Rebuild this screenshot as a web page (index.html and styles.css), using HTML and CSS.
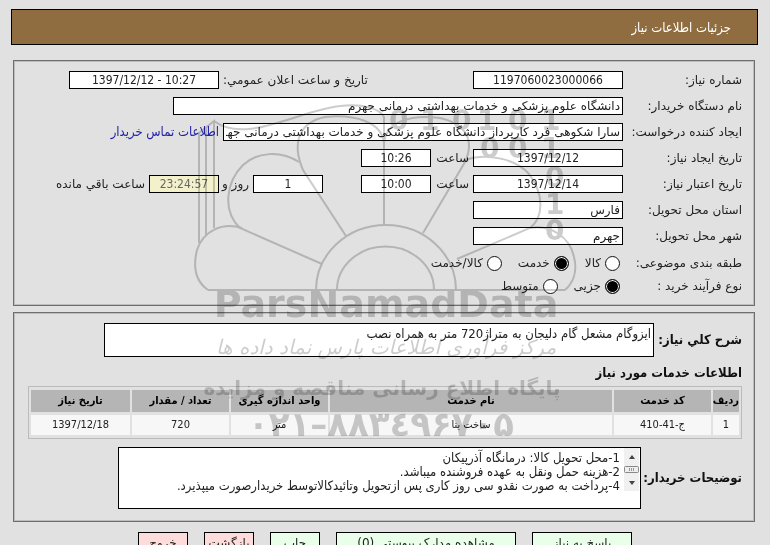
FILE: index.html
```html
<!DOCTYPE html>
<html lang="fa" dir="rtl">
<head>
<meta charset="utf-8">
<meta name="viewport" content="width=device-width, initial-scale=1">
<title>جزئیات اطلاعات نیاز</title>
<link rel="stylesheet" href="styles.css">
</head>
<body>
<header class="title-bar"><h1>جزئیات اطلاعات نیاز</h1></header>
<form class="form">
  <section class="panel details">
    <div class="row">
      <label class="name" for="number">شماره نیاز:</label>
      <input class="field medium center" id="number" value="1197060023000066" readonly>
      <label class="announce" for="announced">تاریخ و ساعت اعلان عمومي:</label>
      <input class="field medium center" id="announced" value="1397/12/12 - 10:27" dir="ltr" readonly>
    </div>
    <div class="row">
      <label class="name" for="buyer">نام دستگاه خریدار:</label>
      <input class="field long" id="buyer" value="دانشگاه علوم پزشکی و خدمات بهداشتی درمانی جهرم" readonly>
    </div>
    <div class="row">
      <label class="name" for="creator">ایجاد کننده درخواست:</label>
      <input class="field creator" id="creator" value="سارا شکوهی فرد کارپرداز دانشگاه علوم پزشکی و خدمات بهداشتی درمانی جهرم" readonly>
      <a class="contact" href="#contact">اطلاعات تماس خریدار</a>
    </div>
    <div class="row">
      <label class="name" for="created">تاریخ ایجاد نیاز:</label>
      <input class="field medium center" id="created" value="1397/12/12" readonly>
      <label class="word" for="created-time">ساعت</label>
      <input class="field short center" id="created-time" value="10:26" readonly>
    </div>
    <div class="row">
      <label class="name" for="valid">تاریخ اعتبار نیاز:</label>
      <input class="field medium center" id="valid" value="1397/12/14" readonly>
      <label class="word" for="valid-time">ساعت</label>
      <input class="field short center" id="valid-time" value="10:00" readonly>
      <input class="field short center days" id="days" value="1" readonly>
      <label class="word days-word" for="days">روز و</label>
      <input class="field short center remaining" id="remaining" value="23:24:57" readonly>
      <label for="remaining">ساعت باقي مانده</label>
    </div>
    <div class="row">
      <label class="name" for="province">استان محل تحویل:</label>
      <input class="field medium" id="province" value="فارس" readonly>
    </div>
    <div class="row">
      <label class="name" for="city">شهر محل تحویل:</label>
      <input class="field medium" id="city" value="جهرم" readonly>
    </div>
    <div class="choice-rows">
      <div class="row choices" role="radiogroup" aria-labelledby="subject">
        <span class="name" id="subject">طبقه بندی موضوعی:</span>
        <label><input type="radio" name="subject">کالا</label>
        <label><input type="radio" name="subject" checked>خدمت</label>
        <label><input type="radio" name="subject">کالا/خدمت</label>
      </div>
      <div class="row choices" role="radiogroup" aria-labelledby="process">
        <span class="name" id="process">نوع فرآیند خرید :</span>
        <label><input type="radio" name="process" checked>جزیی</label>
        <label><input type="radio" name="process">متوسط</label>
      </div>
    </div>
  </section>

  <section class="panel request">
    <div class="block-row">
      <label class="strong" for="summary">شرح کلي نیاز:</label>
      <textarea class="summary" id="summary" readonly>ایزوگام مشعل گام دلیجان به متراژ720 متر به همراه نصب</textarea>
    </div>
    <h2>اطلاعات خدمات مورد نیاز</h2>
    <table>
      <colgroup><col class="c-row"><col class="c-code"><col><col class="c-std"><col class="c-std"><col class="c-date"></colgroup>
      <thead><tr><th>ردیف</th><th>کد خدمت</th><th>نام خدمت</th><th>واحد اندازه گیری</th><th>تعداد / مقدار</th><th>تاریخ نیاز</th></tr></thead>
      <tbody><tr><td>1</td><td>ج-41-410</td><td>ساخت بنا</td><td>متر</td><td>720</td><td>1397/12/18</td></tr></tbody>
    </table>
    <div class="block-row notes-row">
      <label class="strong" for="notes">توضیحات خریدار:</label>
      <div class="notes">
        <svg class="scroll" viewBox="0 0 15 43" aria-hidden="true"><path class="track" d="M0 0h15v43H0z"/><path class="arrow" d="M5 11l3-4 3 4zM5 33l3 4 3-4z"/><rect class="thumb" x="0.5" y="18.5" width="14" height="6" rx="1"/><path class="grip" d="M5.5 20v3M7.5 20v3M9.5 20v3"/></svg>
        <textarea id="notes" readonly>1-محل تحویل کالا: درمانگاه آذرپیکان
2-هزینه حمل ونقل به عهده فروشنده میباشد.
4-پرداخت به صورت نقدو سی روز کاری پس ازتحویل وتائیدکالاتوسط خریدارصورت میپذیرد.</textarea>
      </div>
    </div>
  </section>

  <div class="actions">
    <button class="go reply" type="button">پاسخ به نیاز</button>
    <button class="go files" type="button">مشاهده مدارک پیوستی (0)</button>
    <button class="go" type="button">چاپ</button>
    <button class="stop" type="button">بازگشت</button>
    <button class="stop" type="button">خروج</button>
  </div>
</form>

<svg class="watermark" viewBox="180 90 420 360" aria-hidden="true" direction="ltr">
  <g class="lines">
    <path d="M337 290a48 43 0 0 1 97 0M316 290a70 65 0 0 1 140 0M208 290H565"/>
    <path d="M384 225V143C382 122 355 114 325 117C300 122 291 142 303 170L346 236M384 143C386 122 410 114 440 118C466 124 475 140 465 162L423 233"/>
    <path d="M299 162C280 150 257 152 243 165C226 182 222 211 240 228L322 264M466 160C485 153 515 158 529 174C543 192 545 216 530 228L457 259"/>
    <path d="M242 228C222 222 203 231 197 250C192 270 198 283 208 290M530 228C550 224 570 237 574 257C578 273 572 284 565 290"/>
    <path d="M199 243V133L214 121V228M206 236V127M214 121C245 145 300 110 340 106C363 103 380 109 384 117V143"/>
  </g>
  <g class="digits">
    <text x="389 420 452 477 508 541" y="130">010101</text><text x="480 508 541" y="158">001</text>
    <text x="545" y="187">0</text><text x="545" y="214">1</text><text x="545" y="240">0</text>
  </g>
  <text class="brand" x="386" y="317">ParsNamadData</text>
  <text class="tagline" x="386" y="354">مرکز فرآوری اطلاعات پارس نماد داده ها</text>
  <text class="site" x="382" y="395">پایگاه اطلاع رسانی مناقصه و مزایده</text>
  <text class="phone" x="381" y="436">۰۲۱–۸۸۳٤۹۶۷۰۵</text>
</svg>
</body>
</html>
```
FILE: styles.css
```css
* { box-sizing: border-box; }
html { overflow: hidden; }
body { position: relative; margin: 0; padding: 9px 12px 0 11px; background: #e1e1e1; color: #222; font: 12px/16px "DejaVu Sans", sans-serif; }
input, textarea, button { font: inherit; color: inherit; margin: 0; border-radius: 0; }
.title-bar { height: 36px; padding: 10px 26px; border: 1px solid #000; background: #8f6d41; color: #fff; }
h1 { margin: 0; font: 13px/16px "DejaVu Sans Condensed", sans-serif; }
.form { padding: 15px 3px 0 2px; }
.panel { border: 1px solid #6f6f6f; box-shadow: inset 0 0 0 1px #bdbdbd; padding: 10px 12px; }
.row { display: flex; align-items: center; gap: 4px; height: 18px; margin-bottom: 8px; white-space: nowrap; }
.name { width: 115px; flex: none; }
.field { height: 18px; padding: 0 2px; border: 1px solid #000; background: #fff; flex: none; }
.center { text-align: center; font-family: "DejaVu Sans Condensed", sans-serif; }
.medium { width: 150px; }
.short { width: 70px; }
.long { width: 450px; }
.creator { width: 400px; }
.announce { margin-right: auto; }
.details > .row:first-child { padding-left: 43px; }
.contact { color: #22a; text-decoration: none; font: 13px/16px "DejaVu Sans Condensed", sans-serif; }
.word { width: 34px; }
.days { margin-right: 34px; }
.days-word { width: 26px; }
.remaining { background: #f3f1cb; color: #666; }
.choice-rows { padding-top: 1px; }
.choices { gap: 0; margin: 0 0 5px; }
.choices .name { width: 122px; }
.choices label { display: flex; align-items: center; gap: 4px; }
.choices label + label { margin-right: 16px; }
.choices input { appearance: none; width: 15px; height: 15px; border: 1px solid #111; border-radius: 50%; background: #fff; }
.choices input:checked { background: #000; box-shadow: inset 0 0 0 1px #fff; }
.details { padding-bottom: 5px; }
.request { margin-top: 6px; padding-bottom: 12px; }
.strong, h2 { font: bold 13px/16px "DejaVu Sans Condensed", sans-serif; color: #111; }
.block-row { display: flex; align-items: center; gap: 4px; }
.block-row .strong { width: 84px; flex: none; white-space: nowrap; }
.summary, .notes textarea { font: 13px/14px "DejaVu Sans Condensed", sans-serif; resize: none; overflow: hidden; }
.summary { width: 550px; height: 34px; padding: 3px 2px; border: 1px solid #000; background: #fff; }
h2 { margin: 8px 0 5px; }
table { width: calc(100% - 2px); margin-left: 2px; table-layout: fixed; border: 1px solid #bbb; border-spacing: 2px 3px; background: #e1e1e1; font: 11px/16px "DejaVu Sans Condensed", sans-serif; text-align: center; }
th, td { height: 20px; padding: 0; white-space: nowrap; }
th { height: 22px; background: #b5b5b5; color: #000; }
td { background: #f7f7f7; }
.c-row { width: 26px; }
.c-code { width: 97px; }
.c-std { width: 97px; }
.c-date { width: 99px; }
.notes-row { margin-top: 8px; }
.notes-row .strong { width: 97px; }
.notes { display: flex; width: 523px; height: 62px; border: 1px solid #000; background: #fff; }
.notes textarea { flex: 1; padding: 3px 4px; border: 0; background: transparent; }
.scroll { width: 15px; height: 43px; margin-right: 1px; }
.track { fill: #f0f0f0; }
.arrow { fill: #444; }
.thumb { fill: #eee; stroke: #888; }
.grip { stroke: #999; }
.actions { display: flex; gap: 16px; margin-top: 10px; padding-right: 123px; }
.actions button { width: 50px; height: 22px; padding: 0; border: 1px solid #000; white-space: nowrap; overflow: hidden; }
.actions .reply { width: 100px; }
.actions .files { width: 180px; }
.actions .go { background: #eaffea; }
.actions .stop { background: #ffdcdc; }
.watermark { position: absolute; top: 90px; left: 180px; width: 420px; height: 360px; pointer-events: none; mix-blend-mode: multiply; direction: ltr; opacity: .2; }
.lines { fill: none; stroke: #000; stroke-width: 2; }
.digits { font: bold 28px "DejaVu Sans", sans-serif; }
.brand { font: bold 38px "DejaVu Sans", sans-serif; text-anchor: middle; }
.tagline { font: italic 20px "DejaVu Sans", sans-serif; text-anchor: middle; }
.site { font: bold 20px "DejaVu Sans", sans-serif; text-anchor: middle; }
.phone { font: bold 34px "DejaVu Sans", sans-serif; text-anchor: middle; }
```
